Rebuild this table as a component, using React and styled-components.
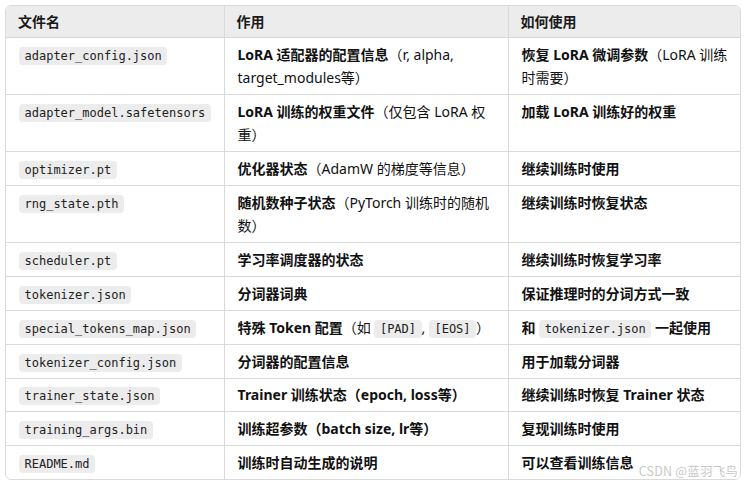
import React from "react";
import styled, { createGlobalStyle } from "styled-components";

const Global = createGlobalStyle`
  html, body { margin: 0; padding: 0; background: #fff; }
  body {
    font-family: "Noto Sans", "Noto Sans CJK SC", sans-serif;
    color: #111;
  }
`;

const Page = styled.div`
  position: relative;
  width: 747px;
  height: 486px;
  padding: 5px 6px 5px 5px;
  box-sizing: border-box;
`;

const Frame = styled.div`
  border: 1px solid #d9d9d9;
  border-radius: 6px;
  overflow: hidden;
`;

const Table = styled.table`
  width: 100%;
  border-collapse: collapse;
  table-layout: fixed;
  font-size: 14px;
  line-height: 23.3px;
`;

const Head = styled.th`
  background: #ececec;
  text-align: left;
  font-weight: 700;
  padding: 4px 12px 4px 12px;
  border-left: ${(p) => (p.$first ? "none" : "1px solid #d9d9d9")};
  border-bottom: 1px solid #d9d9d9;
  color: #1a1a1a;
`;

const Cell = styled.td`
  padding: 4.75px 12px 4.75px 13px;
  vertical-align: top;
  border-left: ${(p) => (p.$first ? "none" : "1px solid #d9d9d9")};
  border-top: ${(p) => (p.$top ? "none" : "1px solid #d9d9d9")};
`;

const Code = styled.code`
  font-family: "DejaVu Sans Mono", monospace;
  font-size: 12px;
  line-height: 14px;
  background: #ececec;
  border-radius: 4px;
  padding: 2px 5.5px;
  color: #222;
`;

const B = styled.b`
  font-weight: 700;
`;

const Mark = styled.div`
  position: absolute;
  right: 9px;
  bottom: 7px;
  font-family: "Noto Sans CJK SC", "Noto Sans", sans-serif;
  font-size: 12.5px;
  line-height: 16px;
  color: #c8c8c8;
  background: rgba(255, 255, 255, 0.6);
  letter-spacing: 0.2px;
`;

const rows = [
  [
    "adapter_config.json",
    <><B>LoRA 适配器的配置信息</B>（r, alpha, target_modules等）</>,
    <><B>恢复 LoRA 微调参数</B>（LoRA 训练时需要）</>,
  ],
  [
    "adapter_model.safetensors",
    <><B>LoRA 训练的权重文件</B>（仅包含 LoRA 权重）</>,
    <B>加载 LoRA 训练好的权重</B>,
  ],
  ["optimizer.pt", <><B>优化器状态</B>（AdamW 的梯度等信息）</>, <B>继续训练时使用</B>],
  [
    "rng_state.pth",
    <><B>随机数种子状态</B>（PyTorch 训练时的随机数）</>,
    <B>继续训练时恢复状态</B>,
  ],
  ["scheduler.pt", <B>学习率调度器的状态</B>, <B>继续训练时恢复学习率</B>],
  ["tokenizer.json", <B>分词器词典</B>, <B>保证推理时的分词方式一致</B>],
  [
    "special_tokens_map.json",
    <><B>特殊 Token 配置</B>（如 <Code>[PAD]</Code>, <Code>[EOS]</Code>）</>,
    <><B>和</B> <Code>tokenizer.json</Code> <B>一起使用</B></>,
  ],
  ["tokenizer_config.json", <B>分词器的配置信息</B>, <B>用于加载分词器</B>],
  ["trainer_state.json", <B>Trainer 训练状态（epoch, loss等）</B>, <B>继续训练时恢复 Trainer 状态</B>],
  ["training_args.bin", <B>训练超参数（batch size, lr等）</B>, <B>复现训练时使用</B>],
  ["README.md", <B>训练时自动生成的说明</B>, <B>可以查看训练信息</B>],
];

export default function App() {
  return (
    <Page>
      <Global />
      <Frame>
        <Table>
          <colgroup>
            <col style={{ width: "218px" }} />
            <col style={{ width: "284px" }} />
            <col />
          </colgroup>
          <thead>
            <tr>
              <Head $first>文件名</Head>
              <Head>作用</Head>
              <Head>如何使用</Head>
            </tr>
          </thead>
          <tbody>
            {rows.map((r, i) => (
              <tr key={i}>
                <Cell $first $top={i === 0}>
                  <Code>{r[0]}</Code>
                </Cell>
                <Cell $top={i === 0}>{r[1]}</Cell>
                <Cell $top={i === 0}>{r[2]}</Cell>
              </tr>
            ))}
          </tbody>
        </Table>
      </Frame>
      <Mark>CSDN @蓝羽飞鸟</Mark>
    </Page>
  );
}
